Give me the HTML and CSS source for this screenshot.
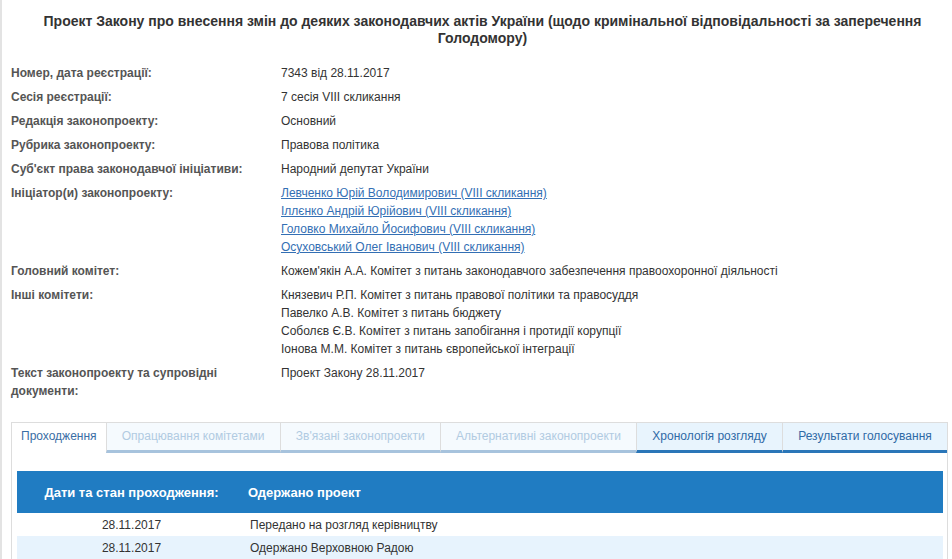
FILE: index.html
```html
<!DOCTYPE html>
<html lang="uk">

<head>
    <meta charset="UTF-8">
    <meta name="viewport" content="width=device-width, initial-scale=1.0">
    <title>Картка законопроекту 7343</title>
    <link rel="stylesheet" href="styles.css">
</head>

<body>
    <div class="page">
        <h3 class="bill-title">Проект Закону про внесення змін до деяких законодавчих актів України (щодо кримінальної відповідальності за заперечення Голодомору)</h3>

        <div class="info">
            <div class="info-label">Номер, дата реєстрації:</div>
            <div class="info-value">7343 від 28.11.2017</div>

            <div class="info-label">Сесія реєстрації:</div>
            <div class="info-value">7 сесія VIII скликання</div>

            <div class="info-label">Редакція законопроекту:</div>
            <div class="info-value">Основний</div>

            <div class="info-label">Рубрика законопроекту:</div>
            <div class="info-value">Правова політика</div>

            <div class="info-label">Суб'єкт права законодавчої ініціативи:</div>
            <div class="info-value">Народний депутат України</div>

            <div class="info-label">Ініціатор(и) законопроекту:</div>
            <div class="info-value">
                <a href="#">Левченко Юрій Володимирович (VIII скликання)</a><br>
                <a href="#">Іллєнко Андрій Юрійович (VIII скликання)</a><br>
                <a href="#">Головко Михайло Йосифович (VIII скликання)</a><br>
                <a href="#">Осуховський Олег Іванович (VIII скликання)</a>
            </div>

            <div class="info-label">Головний комітет:</div>
            <div class="info-value">Кожем'якін А.А. Комітет з питань законодавчого забезпечення правоохоронної діяльності</div>

            <div class="info-label">Інші комітети:</div>
            <div class="info-value">
                Князевич Р.П. Комітет з питань правової політики та правосуддя<br>
                Павелко А.В. Комітет з питань бюджету<br>
                Соболєв Є.В. Комітет з питань запобігання і протидії корупції<br>
                Іонова М.М. Комітет з питань європейської інтеграції
            </div>

            <div class="info-label">Текст законопроекту та супровідні документи:</div>
            <div class="info-value">Проект Закону 28.11.2017</div>
        </div>

        <div class="tabs">
            <ul class="tab-nav">
                <li class="tab active">Проходження</li>
                <li class="tab">Опрацювання комітетами</li>
                <li class="tab">Зв'язані законопроекти</li>
                <li class="tab">Альтернативні законопроекти</li>
                <li class="tab tab-on">Хронологія розгляду</li>
                <li class="tab tab-on">Результати голосування</li>
            </ul>

            <div class="tab-panel">
                <table class="flow">
                    <tr class="flow-head">
                        <th class="col-date">Дати та стан проходження:</th>
                        <th>Одержано проект</th>
                    </tr>
                    <tr>
                        <td class="col-date">28.11.2017</td>
                        <td>Передано на розгляд керівництву</td>
                    </tr>
                    <tr class="alt">
                        <td class="col-date">28.11.2017</td>
                        <td>Одержано Верховною Радою</td>
                    </tr>
                </table>
            </div>
        </div>
    </div>
</body>

</html>
```

FILE: styles.css
```css
body {
    margin: 0;
    font-family: "Liberation Sans", Arial, sans-serif;
    font-size: 12px;
    color: #333;
    background-color: #fff;
}

.page {
    border-left: 2px solid #e3e3e3;
    min-height: 559px;
    padding: 13px 4px 0 9px;
}

.bill-title {
    margin: 0 0 17px 0;
    padding-left: 6px;
    font-size: 14px;
    line-height: 17px;
    font-weight: bold;
    text-align: center;
    color: #333;
}

.info {
    display: grid;
    grid-template-columns: 270px 1fr;
    row-gap: 6px;
    line-height: 18px;
}

.info-label {
    font-weight: bold;
    color: #555;
    padding-right: 20px;
}

.info-value {
    color: #333;
}

.info-value a {
    color: #336fb4;
    text-decoration: underline;
}

/* tabs */
.tabs {
    margin-top: 22px;
    border: 1px solid #ddd;
    border-bottom: none;
}

.tab-nav {
    display: flex;
    margin: 0;
    padding: 0;
    list-style: none;
}

.tab {
    flex: auto;
    height: 27px;
    line-height: 27px;
    padding: 0 6px;
    text-align: center;
    white-space: nowrap;
    color: #b1cbe2;
    background-color: #f5fafe;
    border-left: 1px solid #ddd;
    border-bottom: 3px solid #a7c3dd;
}

.tab:first-child {
    border-left: none;
}

.tab.active {
    flex: none;
    padding: 0 9px;
    color: #3a6ea5;
    background-color: #fff;
    border-bottom-color: #fff;
}

.tab.tab-on {
    color: #2f6aa6;
    background-color: #e8f4fd;
    border-bottom-color: #2a76b8;
}

.tab-panel {
    padding: 18px 4px 0 5px;
}

.flow {
    width: 100%;
    border-collapse: collapse;
}

.flow th {
    height: 42px;
    padding: 0 0 0 2px;
    background-color: #207cc2;
    color: #fff;
    font-size: 13px;
    font-weight: bold;
    text-align: left;
}

.flow td {
    height: 23px;
    padding: 0 0 0 4px;
}

.flow .col-date {
    width: 229px;
    padding: 0;
    text-align: center;
}

.flow tr.alt td {
    background-color: #e7f3fd;
}
```
